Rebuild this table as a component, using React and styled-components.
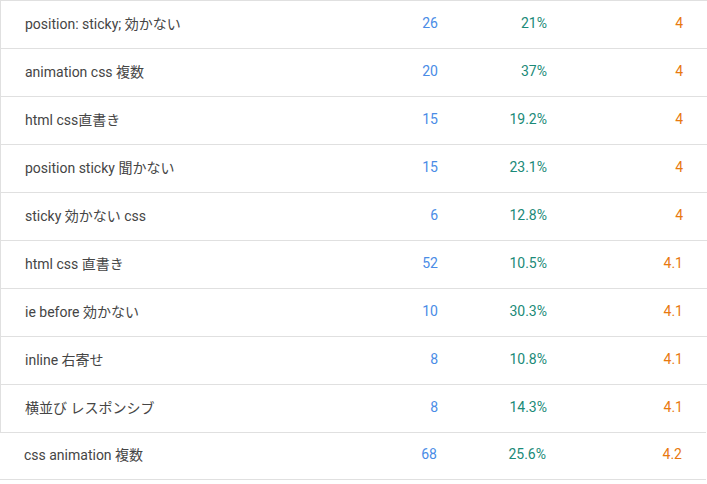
import React from "react";
import styled, { createGlobalStyle } from "styled-components";

const Global = createGlobalStyle`
  html, body { margin: 0; padding: 0; background: #fff; }
  body { font-family: Roboto, "Noto Sans CJK JP", sans-serif; }
`;

const Table = styled.div`
  display: flex;
  flex-direction: column;
  width: 707px;
`;

const Row = styled.div`
  display: grid;
  grid-template-columns: 1fr 80px 109px 136px;
  align-items: center;
  box-sizing: border-box;
  height: 48px;
  width: ${(p) => (p.$last ? "706px" : "707px")};
  padding: 0 24px;
  border-top: 1px solid #e0e0e0;
  border-left: ${(p) => (p.$last ? "none" : "1px solid #e0e0e0")};
  border-bottom: ${(p) => (p.$last ? "1px solid #e0e0e0" : "none")};
  font-size: 14px;
`;

const Keyword = styled.div`
  color: #454545;
  white-space: nowrap;
  padding-bottom: 4px;
`;

const Num = styled.div`
  text-align: right;
  color: ${(p) => p.$color};
  padding-bottom: 4px;
`;

const data = [
  ["position: sticky; 効かない", "26", "21%", "4"],
  ["animation css 複数", "20", "37%", "4"],
  ["html css直書き", "15", "19.2%", "4"],
  ["position sticky 聞かない", "15", "23.1%", "4"],
  ["sticky 効かない css", "6", "12.8%", "4"],
  ["html css 直書き", "52", "10.5%", "4.1"],
  ["ie before 効かない", "10", "30.3%", "4.1"],
  ["inline 右寄せ", "8", "10.8%", "4.1"],
  ["横並び レスポンシブ", "8", "14.3%", "4.1"],
  ["css animation 複数", "68", "25.6%", "4.2"],
];

export default function App() {
  return (
    <>
      <Global />
      <Table>
        {data.map(([k, c, p, r], i) => (
          <Row key={i} $last={i === data.length - 1}>
            <Keyword>{k}</Keyword>
            <Num $color="#4a8ce6">{c}</Num>
            <Num $color="#1b8a78">{p}</Num>
            <Num $color="#e8790f">{r}</Num>
          </Row>
        ))}
      </Table>
    </>
  );
}
